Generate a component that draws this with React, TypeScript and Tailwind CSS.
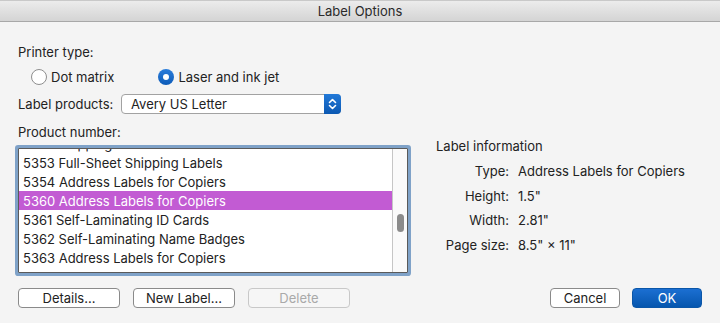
import React from 'react';

const products = [
  '5352 Shipping Labels',
  '5353 Full-Sheet Shipping Labels',
  '5354 Address Labels for Copiers',
  '5360 Address Labels for Copiers',
  '5361 Self-Laminating ID Cards',
  '5362 Self-Laminating Name Badges',
  '5363 Address Labels for Copiers',
];

const Radio: React.FC<{ checked?: boolean; label: string }> = ({ checked, label }) => (
  <div className="flex items-center gap-[4px]">
    {checked ? (
      <span className="w-[16px] h-[16px] rounded-full bg-gradient-to-b from-[#2a7ddb] to-[#0b5bb8] flex items-center justify-center">
        <span className="w-[6px] h-[6px] rounded-full bg-white" />
      </span>
    ) : (
      <span className="w-[16px] h-[16px] rounded-full bg-white border border-[#8e8e8e]" />
    )}
    <span>{label}</span>
  </div>
);

const Button: React.FC<{ label: string; width: string; disabled?: boolean; primary?: boolean }> = ({
  label,
  width,
  disabled,
  primary,
}) => {
  let cls = 'bg-white border border-[#8a8a8a] text-[#222]';
  if (disabled) cls = 'bg-[#f6f6f6] border border-[#c8c8c8] text-[#a9a9a9]';
  if (primary) cls = 'bg-gradient-to-b from-[#1b6fd2] to-[#0556ae] border border-[#0a56a8] text-white';
  return (
    <div className={`${width} h-[20px] rounded-[4px] flex items-center justify-center leading-none ${cls}`}>
      {label}
    </div>
  );
};

export default function App() {
  return (
    <div
      className="w-[720px] h-[323px] bg-[#f4f4f4] text-[#222] text-[13px] leading-[16px] flex flex-col overflow-hidden"
      style={{ fontFamily: 'Inter, "Liberation Sans", sans-serif' }}
    >
      <div className="h-[22px] shrink-0 bg-gradient-to-b from-[#ececec] to-[#d4d4d4] border-b border-[#a8a8a8] border-t border-t-[#c9c9c9] flex items-center justify-center text-[#2a2a2a]">
        Label Options
      </div>

      <div className="flex flex-col px-[18px] pt-[22px]">
        <div>Printer type:</div>
        <div className="flex items-center mt-[9px] pl-[13px] gap-[44px]">
          <Radio label="Dot matrix" />
          <Radio checked label="Laser and ink jet" />
        </div>

        <div className="flex items-center mt-[9px]">
          <span className="w-[103px]">Label products:</span>
          <div className="w-[220px] h-[20px] bg-white border border-[#a2a2a2] rounded-[4px] flex items-center justify-between">
            <span className="pl-[9px]">Avery US Letter</span>
            <span className="w-[17px] h-[20px] -mr-px rounded-r-[4px] bg-gradient-to-b from-[#2279d8] to-[#0b58b2] flex items-center justify-center">
              <svg width="9" height="12" viewBox="0 0 9 12" fill="none" stroke="white" strokeWidth="1.6" strokeLinecap="round" strokeLinejoin="round">
                <path d="M1.5 4.5 L4.5 1.5 L7.5 4.5" />
                <path d="M1.5 7.5 L4.5 10.5 L7.5 7.5" />
              </svg>
            </span>
          </div>
        </div>

        <div className="flex mt-[10px]">
          <div className="flex flex-col w-[390px]">
            <div>Product number:</div>
            <div className="mt-[8px] h-[125px] bg-white border border-[#5a5a5a] shadow-[0_0_0_3px_#7fa2c8] rounded-[1px] flex overflow-hidden">
              <div className="flex-1 overflow-hidden">
                <div className="-mt-[15px]">
                  {products.map((p) => (
                    <div
                      key={p}
                      className={`h-[19px] flex items-center pl-[4px] ${
                        p.startsWith('5360') ? 'bg-[#c25bd3] text-white' : ''
                      }`}
                    >
                      {p}
                    </div>
                  ))}
                </div>
              </div>
              <div className="w-[15px] bg-[#fafafa] border-l border-[#c6c6c6] flex flex-col items-center pt-[65px] pl-[1px]">
                <div className="w-[7px] h-[18px] rounded-full bg-[#8b8b8b]" />
              </div>
            </div>
          </div>

          <div className="flex flex-col ml-[28px] mt-[14px]">
            <div>Label information</div>
            <div className="grid grid-cols-[73px_auto] gap-x-[9px] gap-y-[8.5px] mt-[9px]">
              <span className="text-right">Type:</span>
              <span>Address Labels for Copiers</span>
              <span className="text-right">Height:</span>
              <span>1.5"</span>
              <span className="text-right">Width:</span>
              <span>2.81"</span>
              <span className="text-right">Page size:</span>
              <span>8.5" × 11"</span>
            </div>
          </div>
        </div>

        <div className="flex items-center mt-[15px]">
          <div className="flex gap-[13px]">
            <Button label="Details..." width="w-[102px]" />
            <Button label="New Label..." width="w-[102px]" />
            <Button label="Delete" width="w-[102px]" disabled />
          </div>
          <div className="flex gap-[12px] ml-auto">
            <Button label="Cancel" width="w-[70px]" />
            <Button label="OK" width="w-[70px]" primary />
          </div>
        </div>
      </div>
    </div>
  );
}
